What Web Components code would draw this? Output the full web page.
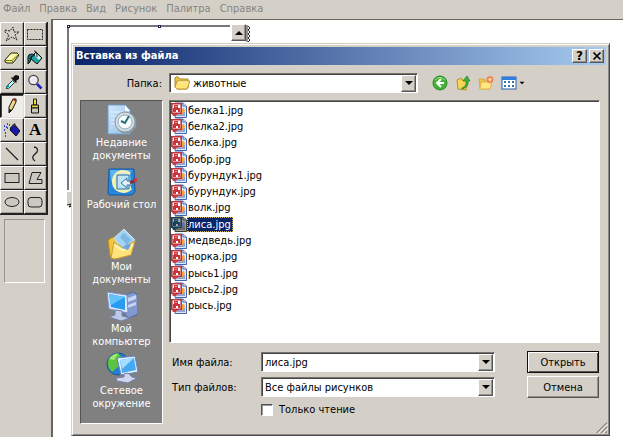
<!DOCTYPE html>
<html lang="ru">
<head>
<meta charset="utf-8">
<meta name="viewport" content="width=device-width, initial-scale=1">
<title>Вставка из файла</title>
<style>
html,body{height:100%;margin:0}
body{font:11px/13px "DejaVu Sans Condensed","DejaVu Sans",sans-serif;color:#000;background:#fff;overflow:hidden}
</style>
</head>
<body>
<paint-app></paint-app>
<script>
const svg=(box,body)=>`<svg viewBox="0 0 ${box} ${box}" aria-hidden="true">${body}</svg>`;
const s='fill="none" stroke="#222"';
const ICONS={
 star:svg(16,`<path ${s} stroke-dasharray="2 1" d="M1 4l5 1 3-4 1 5h5l-4 3 2 5-5-3-6 4 3-6-4-3z"/>`),
 marquee:svg(16,`<rect x=".5" y="3.500" width="15" height="10" ${s} stroke-dasharray="2 1"/>`),
 eraser:svg(16,`<path d="M1 10l6-7h6l2 2-6 8H3l-2-1z" fill="#f3ee72" stroke="#222"/><path d="M1.500 10.500H8l6.500-6M8 10.500l1 2" fill="none" stroke="#777a20"/><path d="M2 10l6-6h5l-6 6z" fill="#fffcb8"/>`),
 fill:svg(16,`<path d="M5 6l4-4 6 6-5 6-6-5z" fill="#20a5a5" stroke="#111"/><path d="M9 3l5 5-2 2-5-5z" fill="#d8f2f0"/><path d="M1 14V7q0-3 4-3l3 1-4 2-1 5z" fill="#087c80" stroke="#111"/><path d="M7 1q3-1 3 6" ${s}/>`),
 picker:svg(16,`<path d="M10 2l2-1 3 1v3l-3 2 1 1-1 1-5-5 1-1 1 1z" fill="#111"/><path d="M8.500 6.500l-6 6v2h2l6-6z" fill="#bff" stroke="#333"/><path d="M1 15l4-5v3z" fill="#00a7ad"/>`),
 zoom:svg(16,`<circle cx="6.500" cy="6" r="4.700" fill="#e9e9f4" stroke="#444" stroke-width="1.200"/><path d="M4 6q0-3 3-3" stroke="#fff" fill="none"/><path d="M10 10l4.500 4.500" stroke="#2222b8" stroke-width="2.600"/>`),
 pencil:svg(16,`<path d="M5 9l4-8h3v3l-4 8-3 3z" fill="#f3d987" stroke="#111"/><path d="M10 1.500l2 1" stroke="#a22" stroke-width="2"/><path d="M5 11v4l3-3z" fill="#111"/>`),
 brush:svg(16,`<path d="M6.500 1h3v6h-3z" fill="#e5dc3a" stroke="#222"/><path d="M4.500 7h7v3h-7z" fill="#ded530" stroke="#111"/><path d="M4.500 10h7v5h-7z" fill="#c8c8b8" stroke="#111"/>`),
 spray:svg(16,`<path d="M7 5l4-2 5 6-4 5-6-6z" fill="#1919a8" stroke="#111"/><path d="M8 3l3-2 1 3-3 1z" fill="#333"/><path d="M0 4h2m1-2h2m-5 6h2m1-2h2m-4 5h1m0-6h1m-2 9h1m3-11h2" stroke="#3348c8" stroke-width="2" stroke-dasharray="1 1"/>`),
 line:svg(16,`<path d="M2 2l12 12" ${s} stroke-width="1.300"/>`),
 curve:svg(16,`<path d="M7 1q5 1 3 5L7 9q-3 3 1 6" ${s} stroke-width="1.300"/>`),
 rect:svg(16,`<rect x="1" y="3.500" width="14" height="9" fill="#cbc8c0" stroke="#222"/>`),
 poly:svg(16,`<path d="M5 2.500h9l-4 7h5v4H2z" fill="#cbc8c0" stroke="#222"/>`),
 ellipse:svg(16,`<ellipse cx="8" cy="8" rx="7" ry="4.500" fill="#cbc8c0" stroke="#222"/>`),
 round:svg(16,`<rect x="1" y="3.500" width="14" height="9.500" rx="3" fill="#cbc8c0" stroke="#222"/>`),
 recent:svg(32,`<defs><linearGradient id="a" x2="1" y2="1"><stop stop-color="#d4e9fb"/><stop offset="1" stop-color="#8fbce8"/></linearGradient></defs><path d="M2 1h17l5 5v24H2z" fill="url(#a)" stroke="#719bc7"/><path d="M19 1v6h5" fill="#fff"/><path d="M5 8h12M5 12h9M5 16h6M5 20h5" stroke="#e4f2ff" stroke-width="1"/><circle cx="20" cy="19" r="10.500" fill="#8d9aa6"/><circle cx="19" cy="18" r="10" fill="#d4dce2" stroke="#8798a5"/><circle cx="19" cy="18" r="7" fill="#f7fdff" stroke="#8eabbd"/><path d="M23 12l-4 7-4-2" fill="none" stroke="#2d6f78" stroke-width="2"/>`),
 desktop:svg(32,`<path d="M3 3h25l1 23-3 3H3l-1-3z" fill="#2687db" stroke="#1457a5"/><path d="M4 4h23L5 15z" fill="#5db4f2"/><path d="M24 8a10 10 0 1 0 1 14" fill="#c9e6d8" stroke="#f4f2b4" stroke-width="3"/><path d="M11 9h12v14H11z" fill="#bfe4f7" stroke="#2770a6"/><path d="M15 17l6-5v3h5v4h-5v3z" fill="#e0f2fa" stroke="#3a76a0"/><path d="M24 17l6-3" stroke="#7c3038" stroke-width="3"/><path d="M28 15l3-2" stroke="#d33" stroke-width="3"/>`),
 docs:svg(32,`<path d="M2 12l5-3 8 3 9 9-15 9-5-2z" fill="#efc43e" stroke="#ba8725"/><path d="M8 10L18 1l11 11-11 13z" fill="#a4d3f1" stroke="#cce8f5"/><path d="M14 9l4-4 7 7-4 5z" fill="#7bb8e4"/><path d="M5 30l3-16 9 6 12-7-4 14-16 4z" fill="#ffe37a" stroke="#c99b30"/><path d="M8 17l9 5 10-5" stroke="#fff5b0" fill="none" stroke-width="2"/><path d="M16 20l5-4 4 1-3 5z" fill="#69a8d8"/>`),
 computer:svg(32,`<path d="M20 5l7-3 5 3v19l-9 4-4-3z" fill="#8298d0" stroke="#55699e"/><path d="M22 8l8-3v4l-8 3zm0 7l8-3v3l-8 3z" fill="#c9d5f1"/><path d="M1 2l20 3 1 18-19-4z" fill="#dbe6fb" stroke="#7690c6"/><path d="M3 4l16 3v13L5 17z" fill="#289bf0"/><path d="M3 4l16 3L5 15z" fill="#62c4fb"/><path d="M9 20l7 1v5l8 2-9 3-12-4 6-2z" fill="#bdc9e9" stroke="#7482ad"/>`),
 network:svg(32,`<circle cx="12" cy="12" r="11" fill="#247ed1" stroke="#195699"/><path d="M2 9q2-7 10-8l4 5-5 3 2 5-7 6q-5-5-4-11z" fill="#5cc440"/><path d="M3 7q5-6 9-5l-4 6z" fill="#a1e773"/><path d="M11 6l18-2 3 16-17 3z" fill="#e2efff" stroke="#6682bd"/><path d="M14 8l14-2 2 12-14 3z" fill="#47a9ef"/><path d="M14 8l14-2-12 11z" fill="#a3ddff"/><path d="M22 21l4 4 5 1-9 5-11-2-1-3 8-1v-3z" fill="#cfd5ee" stroke="#7480ad"/>`),
 folder:svg(16,`<path d="M1 3q1-2 3-1l2 2h8v9l-2 1H3L1 12z" fill="#ebc142" stroke="#b28a2d"/><path d="M3 6h13l-3 8H3L1 12z" fill="#ffe577" stroke="#bd9536"/><path d="M4 7h10" stroke="#fff8bd"/>`),
 back:svg(16,`<circle cx="8" cy="8" r="7" fill="#43b236" stroke="#278a25"/><path d="M3 5q5-5 10 0" stroke="#a2e68d" fill="none"/><path d="M9 4L5 8l4 4M5 8h7" fill="none" stroke="#fff" stroke-width="2"/>`),
 up:svg(16,`<path d="M2 5l4-2 1 2 6 1-2 9-8-1z" fill="#f5d554" stroke="#b7902d"/><path d="M7 13q5-2 4-7H8l4-5 3 5h-2q1 6-6 8z" fill="#40b534" stroke="#217d26" stroke-width=".7"/>`),
 newfolder:svg(16,`<path d="M1 4h5l1 2h5v8H2z" fill="#edc14a" stroke="#d9ac48"/><path d="M3 7h11l-2 7H2z" fill="#ffe680" stroke="#e0b355"/><circle cx="12" cy="4.500" r="2.500" fill="#ffd6a0" stroke="#ee7a4c" stroke-width="1.600"/><path d="M12 0v2m0 5v2M7.500 4.500h2m5 0H16" stroke="#f0a070"/>`),
 views:svg(16,`<rect x="1" y="2" width="14" height="12" fill="#fff" stroke="#245cba"/><path d="M1 2h14v3H1z" fill="#2e7de0"/><path d="M3 7h2m2 0h2m2 0h2M3 11h2m2 0h2m2 0h2" stroke="#2b7aa5" stroke-width="2"/>`),
 picture:svg(16,`<path d="M4 1h8l3.500 3v11.500H4z" fill="#dce8fb" stroke="#4763ae"/><path d="M12 1v3h3" fill="#fff" stroke="#4763ae"/><path d="M6 10h8v4H6z" fill="#8aa5e4"/><path d="M9 12l1-5 3-1 1 3-3 4z" fill="#f3a33a"/><path d="M.8 1.800h9.400v9.400H.8z" fill="#fff" stroke="#c0333a" stroke-width="1.600"/><path d="M3 3h4v3h2v4H7V8H5v2H2V6h1z" fill="#cd3439"/><path d="M4.500 4.500h1" stroke="#fff"/><path d="M1 12h6l-2 2H2z" fill="#c94043"/>`),
 down:svg(16,`<path d="M4 6h8l-4 4z" fill="#000"/>`),
 upArrow:svg(16,`<path d="M4 10h8L8 6z" fill="#000"/>`),
 close:svg(16,`<path d="M4 4l8 8m0-8l-8 8" stroke="#000" stroke-width="2"/>`),
 grip:svg(16,`<path d="M3 15L15 3M8 15l7-7M13 15l2-2" stroke="#827f79" stroke-width="1.500"/><path d="M4 16L16 4M9 16l7-7" stroke="#fff"/>`)
};
const RESET=`*{box-sizing:border-box}button,input,select{font:inherit;color:inherit;margin:0;border-radius:0;outline:0}
.raised{background:#d4d0c8;border:1px solid;border-color:#fff #555 #555 #fff;box-shadow:inset -1px -1px #96938c}`;
function define(name,build){
 customElements.define(name,class extends HTMLElement{
  connectedCallback(){
   if(this.shadowRoot)return;
   const t=document.createElement('template');
   t.innerHTML=build(this);
   this.attachShadow({mode:'open'}).append(t.content.cloneNode(true));
  }
 });
}
define('ui-icon',e=>`<style>:host{display:block;flex:none;width:var(--icon,16px);height:var(--icon,16px)}svg{display:block;width:100%;height:100%}</style>${ICONS[e.getAttribute('name')]}`);

define('menu-bar',()=>`<style>${RESET}:host{display:block;background:#d4d0c8;color:#87847e}
nav{display:flex;gap:9px;padding:2px 3px 4px}a{color:inherit;text-decoration:none}</style>
<nav>${['Файл','Правка','Вид','Рисунок','Палитра','Справка'].map(x=>`<a href="#">${x}</a>`).join('')}</nav>`);

define('tool-button',e=>`<style>${RESET}:host{display:block}
button{display:flex;align-items:center;justify-content:center;width:100%;height:24px;padding:0;background:#d4d0c8;border:1px solid;border-color:#fff #222 #222 #fff;box-shadow:inset -1px -1px #a5a29b}
:host([pressed]) button{background:#efede8;border-color:#111 #ddd #ddd #111;box-shadow:inset 1px 1px #444}
b{font:bold 17px/20px "Liberation Serif",serif}</style>
<button type="button" aria-label="${e.getAttribute('label')}" aria-pressed="${e.hasAttribute('pressed')}">${e.getAttribute('icon')==='text'?'<b>A</b>':`<ui-icon name="${e.getAttribute('icon')}"></ui-icon>`}</button>`);

define('tool-box',()=>`<style>${RESET}:host{display:block;background:#d4d0c8;padding:3px 3px 0 0;border-right:2px solid #67645f}
.grid{display:grid;grid-template-columns:1fr 1fr;border-right:1px solid #222;border-bottom:1px solid #222}
.options{height:64px;margin:4px 3px 0 4px;border:1px solid;border-color:#96938c #fff #fff #96938c}</style>
<div class="grid">${[['star','Выделение области'],['marquee','Выделение'],['eraser','Ластик'],['fill','Заливка'],['picker','Выбор цветов'],['zoom','Масштаб'],['pencil','Карандаш'],['brush','Кисть'],['spray','Распылитель'],['text','Надпись'],['line','Линия'],['curve','Кривая'],['rect','Прямоугольник'],['poly','Многоугольник'],['ellipse','Эллипс'],['round','Скругленный прямоугольник']].map(([i,l])=>`<tool-button icon="${i}" label="${l}"${i==='pencil'?' pressed':''}></tool-button>`).join('')}</div><div class="options"></div>`);

define('canvas-area',()=>`<style>${RESET}:host{display:block;background:#fff;border-top:1px solid #67645f;padding:5px 0 0 14px}
svg{display:block;width:184px;height:184px}
.wrap{display:grid}.wrap>*{grid-area:1/1}
button{width:15px;height:17px;padding:0;margin:-1px 0 0 164px;z-index:1;display:flex;align-items:center;justify-content:center}</style>
<div class="wrap"><svg viewBox="0 0 184 184" aria-hidden="true"><path d="M1 165V1h162" fill="none" stroke="#77777b" stroke-width="2"/><path d="M0 0h3v3H0zM91 0h3v3h-3z" fill="#20224a"/><path d="M1 1h1v1H1zM92 1h1v1h-1z" fill="#fff"/><path d="M0 167h4v12H0z" fill="#d4d0c8"/><path d="M0 180l4-1-2 3 3-1" stroke="#111" fill="none"/><path d="M180 0v17M181 1l2 2-2 2 2 2-2 2 2 2-2 2 2 2-2 2" fill="none" stroke="#222"/></svg>
<button class="raised" type="button" aria-label="Прокрутить вверх"><ui-icon name="upArrow"></ui-icon></button></div>`);

define('title-bar',()=>`<style>${RESET}:host{display:flex;align-items:center;gap:2px;height:18px;padding:0 2px 0 1px;color:#fff;background:linear-gradient(90deg,#0a246a,#a6caf0)}
h1{flex:1;margin:0;font:bold 11px/16px "DejaVu Sans Condensed","DejaVu Sans",sans-serif}
button{width:15px;height:14px;padding:0;display:flex;align-items:center;justify-content:center;color:#000;font:bold 12px/12px "DejaVu Sans",sans-serif;--icon:14px}</style>
<h1><slot></slot></h1><button class="raised" type="button" aria-label="Справка">?</button><button class="raised" type="button" aria-label="Закрыть"><ui-icon name="close"></ui-icon></button>`);

define('combo-field',e=>{
 const v=e.getAttribute('value'),icon=e.getAttribute('icon'),edit=e.hasAttribute('editable');
 return `<style>${RESET}:host{display:grid;grid-template-columns:var(--label) minmax(0,1fr);align-items:center}
label{text-align:var(--align,left);padding-right:var(--label-pad,0)}
.box{display:grid;grid-template-columns:auto 1fr 16px;align-items:center;height:20px;background:#fff;border:1px solid;border-color:#77746e #fff #fff #77746e;box-shadow:inset 1px 1px #444}
.box>*{grid-row:1}.lead{grid-column:1;margin-left:4px;z-index:1;pointer-events:none}
input,select{grid-column:2;min-width:0;width:100%;height:18px;padding:0 3px;border:0;background:transparent;appearance:none}
select{grid-column:2/4}
.arrow{grid-column:3;z-index:1;height:17px;width:15px;padding:0;display:flex;align-items:center;justify-content:center;pointer-events:none}</style>
<label for="c"><slot></slot></label><div class="box">${icon?`<ui-icon class="lead" name="${icon}"></ui-icon>`:''}${edit?`<input id="c" type="text" value="${v}"><button type="button" class="arrow raised" aria-label="Показать список"><ui-icon name="down"></ui-icon></button>`:`<select id="c"><option>${v}</option></select><span class="arrow raised"><ui-icon name="down"></ui-icon></span>`}</div>`});

define('place-item',e=>`<style>${RESET}:host{display:block;height:62px}
button{width:100%;padding:0;border:0;background:none;color:#fff;display:flex;flex-direction:column;align-items:center;line-height:13px;--icon:32px}
</style><button type="button"><ui-icon name="${e.getAttribute('icon')}"></ui-icon><span><slot></slot></span></button>`);

define('places-bar',()=>`<style>${RESET}:host{display:block;background:#808080;border:1px solid;border-color:#555 #fff #fff #555;padding:3px 0 0}</style>
<nav aria-label="Папки"><place-item icon="recent">Недавние<br>документы</place-item><place-item icon="desktop">Рабочий стол</place-item><place-item icon="docs">Мои<br>документы</place-item><place-item icon="computer">Мой<br>компьютер</place-item><place-item icon="network">Сетевое<br>окружение</place-item></nav>`);

define('file-item',e=>`<style>${RESET}:host{display:flex;align-items:center}
span{padding:1px 2px 1px 1px;line-height:13px}
:host([selected]) span{background:#0a246a;color:#fff;outline:1px dotted #d5b85a;outline-offset:-1px}
:host([selected]) ui-icon{filter:brightness(.6) sepia(.4) hue-rotate(200deg)}</style><ui-icon name="picture"></ui-icon><span><slot></slot></span>`);

define('file-list',()=>`<style>${RESET}:host{display:block;background:#fff;border:1px solid;border-color:#77746e #fff #fff #77746e;box-shadow:inset 1px 1px #444;padding:1px 1px 28px}
.rows{display:grid;grid-auto-rows:1fr;height:212px}</style>
<div class="rows" role="listbox" aria-label="Файлы">${['белка1','белка2','белка','бобр','бурундук1','бурундук','волк','лиса','медведь','норка','рысь1','рысь2','рысь'].map(x=>`<file-item role="option"${x==='лиса'?' selected aria-selected="true"':''}>${x}.jpg</file-item>`).join('')}</div>`);

define('push-button',()=>`<style>${RESET}:host{display:block}button{width:100%;height:22px;padding:0}
:host([default]) button{border-color:#111;box-shadow:inset 1px 1px #fff,inset -1px -1px #55524d}</style><button class="raised" type="button"><slot></slot></button>`);

define('open-dialog',()=>`<style>${RESET}:host{display:block;background:#d4d0c8;border:1px solid;border-color:#d4d0c8 #4c4a50 #4c4a50 #d4d0c8;box-shadow:inset 1px 1px #fff,inset -1px -1px #8b8882;padding:3px}
.body{padding:8px 6px 8px 5px;display:grid;grid-template-columns:83px minmax(0,1fr);column-gap:6px;row-gap:7px}
.look{grid-column:1/3;display:grid;grid-template-columns:minmax(0,1fr) 182px;--label:89px}
.look combo-field{--align:right;--label-pad:7px}
.icons{display:flex;align-items:center;gap:7px;padding-left:14px}
.icons button{padding:0;border:0;background:none;display:flex;align-items:center}
.icons .v{--icon:16px}.v ui-icon+ui-icon{--icon:10px}
.right{display:flex;flex-direction:column}
.form{display:grid;grid-template-columns:minmax(0,1fr) 72px;column-gap:32px;row-gap:3px;padding:8px 1px 8px 3px;--label:89px}
.check{display:flex;align-items:center;gap:6px;padding:2px 0 0 89px}
.check input{appearance:none;width:12px;height:12px;background:#fff;border:1px solid;border-color:#555 #fff #fff #555;box-shadow:inset 1px 1px #999}
.check label{line-height:13px}
ui-icon.grip{--icon:14px;position:absolute;right:1px;bottom:1px}</style>
<title-bar>Вставка из файла</title-bar>
<div class="body"><div class="look"><combo-field value="животные" icon="folder">Папка:</combo-field>
<div class="icons"><button type="button" aria-label="Назад"><ui-icon name="back"></ui-icon></button><button type="button" aria-label="Вверх"><ui-icon name="up"></ui-icon></button><button type="button" aria-label="Создать папку"><ui-icon name="newfolder"></ui-icon></button><button class="v" type="button" aria-label="Вид"><ui-icon name="views"></ui-icon><ui-icon name="down"></ui-icon></button></div></div>
<places-bar></places-bar>
<div class="right"><file-list></file-list>
<div class="form"><combo-field value="лиса.jpg" editable>Имя файла:</combo-field><push-button default>Открыть</push-button>
<combo-field value="Все файлы рисунков">Тип файлов:</combo-field><push-button>Отмена</push-button>
<div class="check"><input id="ro" type="checkbox"><label for="ro">Только чтение</label></div></div></div></div>
<ui-icon class="grip" name="grip"></ui-icon>`);

define('paint-app',()=>`<style>${RESET}:host{display:grid;grid-template-rows:auto 1fr;min-height:100vh;background:#fff}
.work{display:grid;grid-template-columns:53px minmax(0,1fr)}
open-dialog{position:absolute;left:71px;right:13px;top:43px}</style>
<menu-bar></menu-bar><div class="work"><tool-box></tool-box><canvas-area></canvas-area></div>
<open-dialog role="dialog" aria-label="Вставка из файла"></open-dialog>`);
</script>
</body>
</html>
